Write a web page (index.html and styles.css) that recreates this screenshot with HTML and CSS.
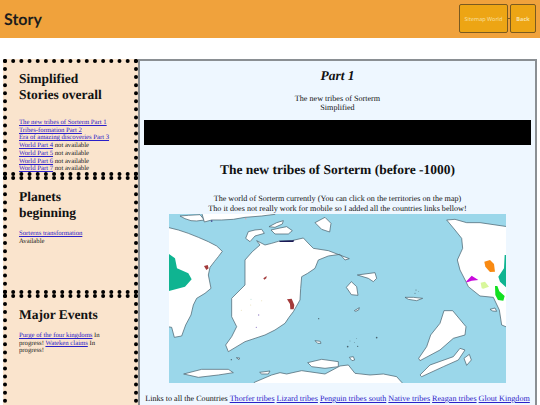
FILE: index.html
```html
<!DOCTYPE html>
<html lang="en">
<head>
<meta charset="utf-8">
<title>Story</title>
<link rel="stylesheet" href="styles.css">
</head>
<body>
<header class="topbar">
  <h1 class="brand">Story</h1>
  <nav class="actions">
    <a class="btn btn-wide">Sitemap World</a>
    <span class="btn-sep"></span>
    <a class="btn btn-small">Back</a>
  </nav>
</header>
<div class="layout">
  <aside class="sidebar">
    <section class="card card-a">
      <h2>Simplified Stories overall</h2>
      <p><a href="#">The new tribes of Sorterm Part 1</a><br>
      <a href="#">Tribes-formation Part 2</a><br>
      <a href="#">Era of amazing discoveries Part 3</a><br>
      <a href="#">World Part 4</a> not available<br>
      <a href="#">World Part 5</a> not available<br>
      <a href="#">World Part 6</a> not available<br>
      <a href="#">World Part 7</a> not available</p>
    </section>
    <section class="card card-b">
      <h2>Planets beginning</h2>
      <p><a href="#">Sorterns transformation</a><br>Available</p>
    </section>
    <section class="card card-c">
      <h2>Major Events</h2>
      <p><a href="#">Purge of the four kingdoms</a> In progress! <a href="#">Wateken claims</a> In progress!</p>
    </section>
  </aside>
  <main class="content">
    <h2 class="part">Part 1</h2>
    <p class="intro">The new tribes of Sorterm<br>Simplified</p>
    <div class="blackbar"></div>
    <h2 class="title">The new tribes of Sorterm (before -1000)</h2>
    <p class="lead">The world of Sorterm currently (You can click on the territories on the map)<br>Tho it does not really work for mobile so I added all the countries links bellow!</p>
    <svg class="map" viewBox="169 214 337 169" width="337" height="169" role="img" aria-label="Map of Sorterm">
      <rect x="169" y="214" width="337" height="169" fill="#9bd7ea"/>
      <g transform="translate(165 210) scale(.33333)" fill="#fff" stroke="#4b6470" stroke-width="2.2" stroke-linejoin="round">
        <path d="M8 52 L40 60 L70 70 L100 82 L130 95 L155 108 L172 124 L160 140 L148 155 L135 172 L130 195 L138 235 L120 250 L95 265 L85 285 L78 315 L62 345 L50 378 L28 382 L20 352 L8 350 Z"/>
        <path d="M45 18 L70 16 L105 14 L118 30 L95 33 L78 32 L60 26 Z"/>
        <path d="M118 36 L140 30 L170 30 L205 28 L240 22 L290 18 L330 13 L330 8 L110 8 Z"/>
        <path d="M275 92 L300 105 L320 100 L340 94 L380 92 L415 84 L432 102 L445 115 L490 122 L553 146 L540 150 L525 133 L490 138 L460 150 L450 175 L428 190 L410 200 L407 235 L405 270 L385 305 L372 322 L360 340 L330 360 L300 375 L240 395 L190 425 L182 405 L200 380 L215 350 L200 320 L200 265 L225 240 L240 225 L240 150 L262 125 L285 105 Z"/>
        <path d="M242 85 L250 65 L270 60 L290 58 L298 70 L270 78 L255 95 Z"/>
        <path d="M312 50 L335 38 L355 32 L352 42 L330 52 Z"/>
        <path d="M318 60 L345 54 L365 50 L382 62 L370 72 L330 72 Z"/>
        <path d="M450 38 L465 30 L480 22 L498 40 L494 66 L470 58 Z"/>
        <path d="M428 458 L470 448 L520 455 L520 470 L480 475 L440 470 Z"/>
        <path d="M56 492 L110 478 L190 478 L205 488 L160 495 L100 502 Z"/>
        <path d="M284 487 L315 483 L310 492 L290 492 Z"/>
        <path d="M268 517 L320 495 L345 488 L365 492 L410 482 L480 492 L525 468 L550 465 L570 490 L615 495 L655 492 L695 500 L711 518 L711 530 L268 530 Z"/>
        <path d="M450 392 L466 394 L468 400 L458 400 Z"/>
        <path d="M214 443 L224 444 L222 449 Z"/>
      </g>
      <g transform="translate(165 210) scale(.33333)">
        <path d="M12 132 L30 145 L36 175 L70 190 L80 208 L60 230 L12 243 Z" fill="#0fb491"/>
        <path d="M117 168 L128 165 L131 175 L124 180 Z" fill="#a33a3a"/>
        <path d="M295 205 L305 198 L304 205 L298 209 Z" fill="#a33a3a"/>
        <path d="M366 268 L380 266 L388 285 L386 298 L376 298 L375 282 Z" fill="#a33a3a"/>
        <path d="M342 92 L388 91 L385 96 L345 96 Z" fill="#1b1a55"/>
        <circle cx="140" cy="33" r="2.5" fill="#3a3a8a"/>
        <circle cx="242" cy="26" r="2" fill="#e8a0a0"/>
        <g fill="#9a86c9">
          <circle cx="281" cy="315" r="2"/>
          <circle cx="274" cy="352" r="2"/>
          <circle cx="258" cy="268" r="1.5" fill="#a9d8cf"/>
          <circle cx="257" cy="285" r="1.5" fill="#e5dcb0"/>
          <circle cx="229" cy="301" r="1.5" fill="#e5dcb0"/>
          <circle cx="290" cy="272" r="1.5" fill="#e5dcb0"/>
        </g>
        <circle cx="461" cy="326" r="2" fill="#4b6470"/>
        <circle cx="199" cy="449" r="2" fill="#4b6470"/>
      </g>
      <g transform="translate(340 210) scale(.33333)" fill="#fff" stroke="#4b6470" stroke-width="2.2" stroke-linejoin="round">
        <path d="M320 30 L345 28 L380 38 L420 38 L502 50 L502 352 L485 345 L478 300 L460 262 L420 258 L385 230 L378 215 L360 180 L352 150 L368 115 L365 85 L345 60 Z"/>
        <path d="M52 195 L105 188 L110 205 L100 215 L85 205 Z"/>
        <path d="M19 232 L34 215 L50 230 L54 256 L34 254 Z"/>
        <path d="M195 262 L220 262 L248 265 L230 272 L205 268 Z"/>
        <path d="M43 302 L58 293 L56 300 L47 304 Z"/>
        <path d="M450 298 L465 294 L470 304 L458 303 Z"/>
        <path d="M312 302 L338 302 L378 350 L375 375 L340 385 L300 420 L240 452 L236 445 L260 410 L272 375 L300 340 Z"/>
        <path d="M240 495 L270 465 L340 440 L360 415 L375 420 L355 450 L310 470 L245 500 Z"/>
        <path d="M372 445 L388 433 L394 450 L380 466 Z"/>
        <path d="M28 442 L40 440 L44 450 L36 452 Z"/>
      </g>
      <g transform="translate(340 210) scale(.33333)">
        <path d="M433 155 L450 150 L462 162 L465 185 L450 186 L436 170 Z" fill="#f98a12"/>
        <path d="M494 135 L498 135 L498 232 L480 215 L475 200 L492 175 Z" fill="#0fb491"/>
        <path d="M378 215 L395 197 L415 210 L395 212 L382 217 Z" fill="#c909dd"/>
        <path d="M422 218 L435 215 L447 230 L430 236 L425 235 Z" fill="#d8f79b"/>
        <path d="M465 228 L472 228 L478 244 L494 258 L490 272 L474 270 L466 255 Z" fill="#12e020"/>
        <g fill="#4b6470">
          <circle cx="110" cy="383" r="2.5"/><circle cx="23" cy="410" r="2.5"/><circle cx="53" cy="409" r="2"/>
          <circle cx="30" cy="393" r="1.2"/><circle cx="43" cy="397" r="1.2"/><circle cx="50" cy="385" r="1.2"/>
          <circle cx="228" cy="240" r="1.5"/><circle cx="225" cy="250" r="1.5"/><circle cx="235" cy="245" r="1"/>
        </g>
      </g>
    </svg>
    <p class="links">Links to all the Countries <a href="#">Thorfer tribes</a> <a href="#">Lizard tribes</a> <a href="#">Penguin tribes south</a> <a href="#">Native tribes</a> <a href="#">Reagan tribes</a> <a href="#">Glout Kingdom</a></p>
  </main>
</div>
</body>
</html>
```
FILE: styles.css
```css
* { box-sizing: border-box; }
html, body { margin: 0; padding: 0; height: 405px; overflow: hidden; background: #fff; }
body { font-family: "Liberation Serif", serif; font-size: 6.7px; line-height: 7.7px; color: #222; text-rendering: geometricPrecision; }
a { color: #2a20c8; text-decoration: underline; }

.topbar { height: 38px; background: #f0a23c; display: flex; align-items: center; justify-content: space-between; padding: 0 4px; }
.brand { margin: 0; font: 700 16px Lato, sans-serif; color: #1c1c1c; }
.actions { display: flex; align-items: center; margin-top: -1px; }
.btn { height: 29px; display: flex; align-items: center; justify-content: center; background: #eda514; border: 1px solid #7a5a20; border-radius: 2px; color: #f8e2aa; font: 700 5.5px "Open Sans", sans-serif; text-decoration: none; }
.btn-wide { width: 49px; font-weight: 400; }
.btn-small { width: 26px; }
.btn-sep { width: 2px; height: 1px; background: #7a5a20; }

.layout { display: flex; margin: 21px 3px 0; height: 360px; align-items: stretch; opacity: .999; }
.sidebar { width: 135px; flex: none; display: flex; flex-direction: column; }
.card { background: #fae4cd; border: 4px dotted #000; padding: 0 12px; }
.card h2 { margin: 0; padding-right: 12px; font-size: 13.5px; line-height: 16px; font-weight: 700; color: #111; }
.card p { margin: 9px 0 0; }
.card-a { height: 117px; padding-top: 8px; }
.card-a p { margin-top: 16px; }
.card-b { height: 118px; padding-top: 9px; }
.card-c { flex: 1; padding-top: 9px; }
.card-c p { padding-right: 6px; }

.content { flex: 1; min-width: 0; border: 2px solid #8a8f93; border-bottom: 0; background: #eef7ff; text-align: center; padding: 0 4px; font-size: 8.15px; line-height: 9.3px; display: flex; flex-direction: column; align-items: center; color: #111; }
.part { margin: 7px 0 0; font-size: 13.5px; line-height: 16px; font-style: italic; }
.intro { margin: 9.5px 0 0; }
.blackbar { align-self: stretch; height: 25.5px; background: #000; margin: 7.5px 0 0; }
.title { margin: 17px 0 0; font-size: 13.5px; line-height: 16px; }
.lead { margin: 16.4px 0 0; }
.map { display: block; margin-top: 1px; flex: none; }
.links { margin: 11px 0 0; white-space: nowrap; }
```
